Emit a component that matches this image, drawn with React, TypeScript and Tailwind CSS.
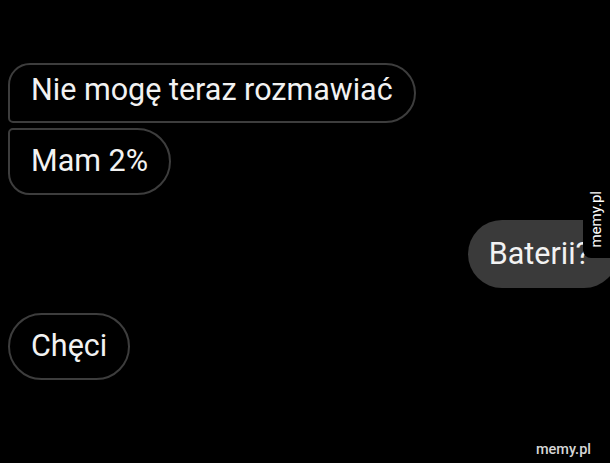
export default function App() {
    return (
        <div className="relative w-[610px] h-[463px] overflow-hidden bg-black text-[#f2f2f2]" style={{ fontFamily: 'Roboto, "Noto Sans", sans-serif' }}>
            <div className="flex flex-col items-start pt-[63px] pl-[8px]">
                <div className="flex h-[60px] items-center rounded-tl-[22px] rounded-bl-[5px] rounded-r-[30px] border-2 border-[#3d3d3d] px-[21px] pb-[5px]">
                    <span className="text-[30.5px] leading-none">Nie mogę teraz rozmawiać</span>
                </div>
                <div className="mt-[5px] flex h-[67px] items-center rounded-tl-[5px] rounded-bl-[22px] rounded-r-[34px] border-2 border-[#3d3d3d] px-[21px]">
                    <span className="text-[30.5px] leading-none">Mam 2%</span>
                </div>
                <div className="mt-[25px] mr-[-8px] flex h-[68px] items-center self-end rounded-full bg-[#3a3a3a] pl-[21px] pr-[28px]">
                    <span className="text-[30.5px] leading-none">Baterii?</span>
                </div>
                <div className="mt-[25px] flex h-[67px] items-center rounded-full border-2 border-[#3d3d3d] px-[21px]">
                    <span className="text-[30.5px] leading-none">Chęci</span>
                </div>
            </div>

            {/* watermark on the side */}
            <div className="absolute top-[180px] right-0 flex h-[78px] w-[27px] items-center justify-center rounded-bl-[8px] bg-black">
                <span className="rotate-180 text-[15px] leading-none text-white [writing-mode:vertical-rl]">memy.pl</span>
            </div>

            <div className="absolute right-[19px] bottom-[6px] text-[14.5px] font-medium leading-none text-[#d6d6d6]">memy.pl</div>
        </div>
    );
}
